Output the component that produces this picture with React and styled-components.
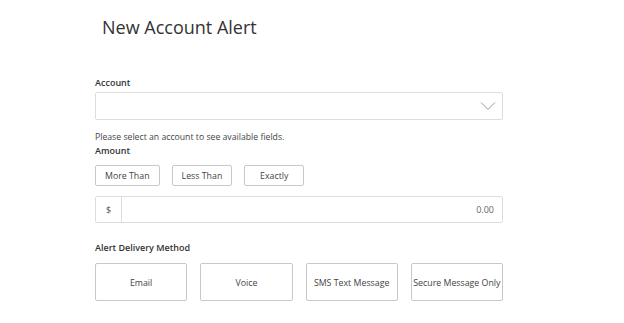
import React from "react";
import styled, { createGlobalStyle } from "styled-components";

const Global = createGlobalStyle`
  html, body { margin: 0; padding: 0; background: #fff; }
  body { font-family: "Open Sans", "Liberation Sans", sans-serif; color: #333; }
  * { box-sizing: border-box; }
`;

const Page = styled.div`
  width: 624px;
  height: 323px;
  padding: 14px 0 0 95px;
  overflow: hidden;
`;

const Title = styled.h1`
  margin: 0 0 0 7px;
  font-size: 18px;
  font-weight: 400;
  line-height: 26px;
  color: #333;
`;

const Form = styled.div`
  width: 408px;
  display: flex;
  flex-direction: column;
`;

const Label = styled.div`
  font-size: 9px;
  font-weight: 600;
  color: #333;
  line-height: 14px;
  margin-top: ${(p) => p.$mt || 0}px;
`;

const SelectBox = styled.div`
  height: 28px;
  margin-top: 2px;
  border: 1px solid #ddd;
  border-radius: 2px;
  background: #fff;
  display: flex;
  align-items: center;
  justify-content: flex-end;
  padding-right: 6px;
`;

const Help = styled.div`
  font-size: 8.7px;
  color: #444;
  line-height: 13px;
  margin-top: 11px;
`;

const ButtonRow = styled.div`
  display: flex;
  gap: 12px;
  margin-top: 7px;
`;

const ToggleButton = styled.button`
  height: 21px;
  min-width: 60px;
  margin: 0;
  padding: 0 9px;
  border: 1px solid #c8c8c8;
  border-radius: 2px;
  background: #fff;
  font-family: inherit;
  font-size: 8.8px;
  color: #444;
  white-space: nowrap;
`;

const AmountInput = styled.div`
  display: flex;
  height: 27px;
  margin-top: 10px;
  border: 1px solid #ddd;
  border-radius: 2px;
`;

const Addon = styled.div`
  width: 26px;
  border-right: 1px solid #ddd;
  display: flex;
  align-items: center;
  justify-content: center;
  font-size: 9px;
  color: #555;
`;

const Value = styled.div`
  flex: 1;
  display: flex;
  align-items: center;
  justify-content: flex-end;
  padding-right: 8px;
  font-size: 9px;
  color: #666;
`;

const DeliveryGrid = styled.div`
  display: grid;
  grid-template-columns: repeat(4, minmax(0, 1fr));
  gap: 13px;
  margin-top: 8px;
`;

const DeliveryButton = styled.button`
  height: 38px;
  margin: 0;
  border: 1px solid #c8c8c8;
  border-radius: 2px;
  background: #fff;
  font-family: inherit;
  font-size: 8.8px;
  color: #444;
  padding: 1px 0 0;
  white-space: nowrap;
`;

const Chevron = () => (
  <svg width="16" height="10" viewBox="0 0 16 10">
    <path d="M1 1.5 L8 8.5 L15 1.5" fill="none" stroke="#999" strokeWidth="1" />
  </svg>
);

export default function App() {
  return (
    <>
      <Global />
      <Page>
        <Title>New Account Alert</Title>
        <Form>
          <Label $mt={36}>Account</Label>
          <SelectBox>
            <Chevron />
          </SelectBox>
          <Help>Please select an account to see available fields.</Help>
          <Label>Amount</Label>
          <ButtonRow>
            <ToggleButton>More Than</ToggleButton>
            <ToggleButton>Less Than</ToggleButton>
            <ToggleButton>Exactly</ToggleButton>
          </ButtonRow>
          <AmountInput>
            <Addon>$</Addon>
            <Value>0.00</Value>
          </AmountInput>
          <Label $mt={18}>Alert Delivery Method</Label>
          <DeliveryGrid>
            <DeliveryButton>Email</DeliveryButton>
            <DeliveryButton>Voice</DeliveryButton>
            <DeliveryButton>SMS Text Message</DeliveryButton>
            <DeliveryButton>Secure Message Only</DeliveryButton>
          </DeliveryGrid>
        </Form>
      </Page>
    </>
  );
}
